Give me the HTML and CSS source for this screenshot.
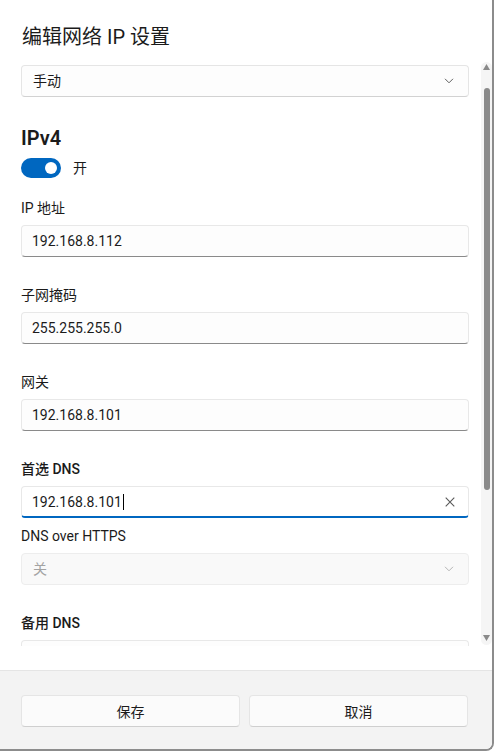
FILE: index.html
```html
<!DOCTYPE html>
<html lang="zh-CN">
<head>
<meta charset="utf-8">
<title>编辑网络 IP 设置</title>
<link rel="stylesheet" href="styles.css">
</head>
<body>
<div class="window">
  <div class="header">
    <h1 class="title">编辑网络 IP 设置</h1>
  </div>
  <div class="scroller">
    <div class="content">
      <div class="select">
        <span>手动</span>
        <svg class="chev" width="10" height="6" viewBox="0 0 10 6"><path d="M1 0.8 L5 4.8 L9 0.8" fill="none" stroke="#5f5f5f" stroke-width="1"/></svg>
      </div>
      <h2 class="section">IPv4</h2>
      <div class="toggle-row">
        <span class="toggle"><span class="knob"></span></span>
        <span class="toggle-text">开</span>
      </div>
      <div class="field first">
        <div class="label">IP 地址</div>
        <div class="input">192.168.8.112</div>
      </div>
      <div class="field">
        <div class="label">子网掩码</div>
        <div class="input">255.255.255.0</div>
      </div>
      <div class="field">
        <div class="label">网关</div>
        <div class="input">192.168.8.101</div>
      </div>
      <div class="field">
        <div class="label strong">首选 DNS</div>
        <div class="input focus">
          <span>192.168.8.101</span><span class="caret"></span>
          <svg class="clear" width="10" height="10" viewBox="0 0 10 10"><path d="M0.7 0.7 L9.3 9.3 M9.3 0.7 L0.7 9.3" fill="none" stroke="#5a5a5a" stroke-width="1.1"/></svg>
        </div>
      </div>
      <div class="label sub">DNS over HTTPS</div>
      <div class="select disabled">
        <span>关</span>
        <svg class="chev" width="10" height="6" viewBox="0 0 10 6"><path d="M1 0.8 L5 4.8 L9 0.8" fill="none" stroke="#b5b5b5" stroke-width="1"/></svg>
      </div>
      <div class="field">
        <div class="label strong">备用 DNS</div>
        <div class="input"></div>
      </div>
    </div>
    <div class="scrollbar">
      <svg class="arrow" width="7" height="6" viewBox="0 0 7 6"><polygon points="3.5,0 7,6 0,6" fill="#8a8a8a"/></svg>
      <div class="thumb"></div>
      <svg class="arrow down" width="7" height="6" viewBox="0 0 7 6"><polygon points="0,0 7,0 3.5,6" fill="#8a8a8a"/></svg>
    </div>
  </div>
  <div class="footer">
    <button class="btn">保存</button>
    <button class="btn">取消</button>
  </div>
</div>
</body>
</html>
```
FILE: styles.css
```css
* { box-sizing: border-box; }
html, body {
  margin: 0;
  padding: 0;
  background: #ffffff;
}
body {
  font-family: Roboto, "Noto Sans CJK SC", sans-serif;
  font-size: 14px;
  color: #1b1b1b;
}
.window {
  width: 494px;
  height: 751px;
  background: #ffffff;
  border-right: 2px solid #8c8c8c;
  border-bottom: 2px solid #8c8c8c;
  border-bottom-right-radius: 8px;
  display: flex;
  flex-direction: column;
  overflow: hidden;
}
.header {
  padding: 23px 22px 11px;
}
.title {
  margin: 0;
  font-size: 20px;
  line-height: 28px;
  font-weight: 400;
}
.scroller {
  height: 584px;
  display: flex;
  overflow: hidden;
}
.content {
  flex: none;
  width: 469px;
  padding: 3px 0 0 21px;
}
.select {
  height: 32px;
  background: #fdfdfd;
  border: 1px solid #e5e5e5;
  border-bottom-color: #d2d2d2;
  border-radius: 4px;
  display: flex;
  align-items: center;
  padding: 0 14px 0 11px;
  line-height: 20px;
}
.select .chev {
  margin-left: auto;
}
.select.disabled {
  margin-top: 7px;
  background: #f9f9f9;
  border-color: #ededed;
  color: #a3a3a3;
}
.section {
  margin: 27px 0 0;
  font-size: 20px;
  line-height: 28px;
  font-weight: 600;
}
.toggle-row {
  margin-top: 6px;
  display: flex;
  align-items: center;
  height: 20px;
}
.toggle {
  width: 40px;
  height: 20px;
  border-radius: 10px;
  background: #0067c0;
  display: flex;
  align-items: center;
  justify-content: flex-end;
  padding-right: 4px;
}
.knob {
  width: 12px;
  height: 12px;
  border-radius: 50%;
  background: #ffffff;
}
.toggle-text {
  margin-left: 12px;
  line-height: 20px;
}
.label {
  line-height: 20px;
}
.label.strong {
  font-weight: 500;
}
.label.sub {
  margin-top: 8px;
}
.field.first {
  margin-top: 20px;
}
.field {
  margin-top: 28px;
}
.input {
  margin-top: 7px;
  height: 32px;
  background: #fdfdfd;
  border: 1px solid #e8e8e8;
  border-bottom-color: #8a8a8a;
  border-radius: 4px;
  display: flex;
  align-items: center;
  padding: 0 13px 0 10px;
  line-height: 20px;
}
.input.focus {
  background: #ffffff;
  border-bottom: 2px solid #0067c0;
  padding-top: 1px;
}
.caret {
  width: 1px;
  height: 16px;
  background: #000000;
  margin-left: 1px;
}
.clear {
  margin-left: auto;
}
.scrollbar {
  margin-left: auto;
  width: 11px;
  height: 583px;
  background: #f5f5f5;
  border-radius: 6px;
  display: flex;
  flex-direction: column;
  align-items: center;
  padding: 2px 0 4px;
}
.arrow {
  flex: none;
}
.thumb {
  margin-top: 18px;
  width: 6px;
  height: 402px;
  border-radius: 3px;
  background: #8a8a8a;
}
.arrow.down {
  margin-top: auto;
}
.footer {
  margin-top: auto;
  height: 79px;
  background: #f3f3f3;
  border-top: 1px solid #e5e5e5;
  display: flex;
  gap: 9px;
  padding: 24px 24px 0 21px;
}
.btn {
  flex: 1;
  height: 32px;
  background: #fbfbfb;
  border: 1px solid #e5e5e5;
  border-bottom-color: #cfcfcf;
  border-radius: 4px;
  font-family: inherit;
  font-size: 14px;
  color: #1b1b1b;
}
```
